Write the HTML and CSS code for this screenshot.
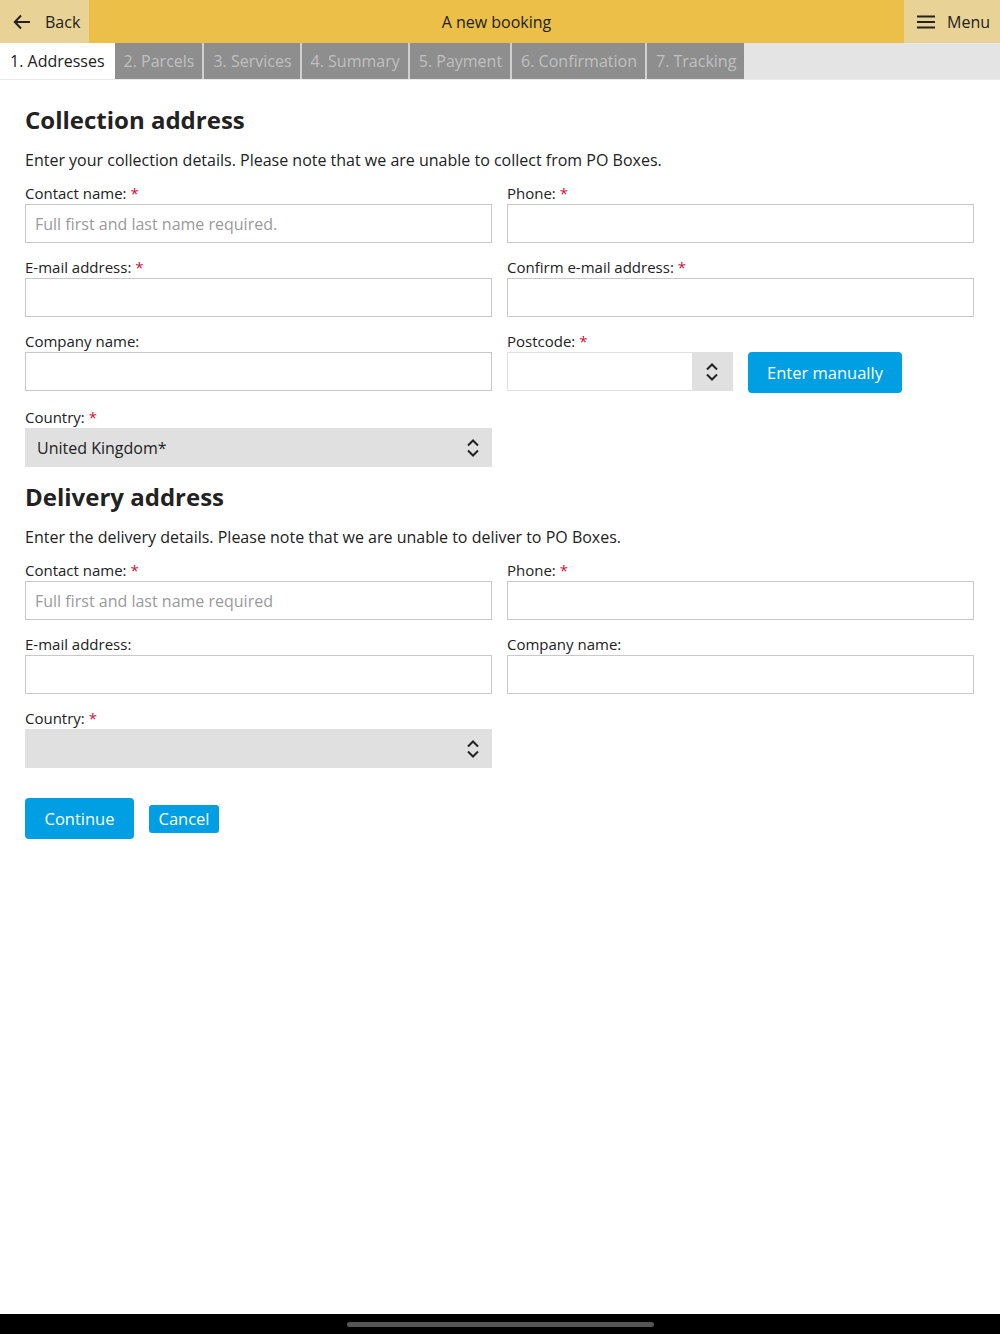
FILE: index.html
```html
<!DOCTYPE html>
<html lang="en">
<head>
<meta charset="utf-8">
<title>A new booking</title>
<link rel="stylesheet" href="styles.css">
</head>
<body>
<div class="app">
  <header class="topbar">
    <a class="nav-btn back">
      <svg width="18" height="16" viewBox="0 0 18 16"><path d="M8 1.5 1.8 8 8 14.5M2 8h15" fill="none" stroke="#222" stroke-width="2"/></svg>
      <span>Back</span>
    </a>
    <div class="title">A new booking</div>
    <a class="nav-btn menu">
      <svg width="18" height="14" viewBox="0 0 18 14"><path d="M0 1.5h18M0 7h18M0 12.5h18" stroke="#222" stroke-width="2"/></svg>
      <span>Menu</span>
    </a>
  </header>
  <nav class="tabs">
    <span class="tab active">1. Addresses</span>
    <span class="tab">2. Parcels</span>
    <span class="tab">3. Services</span>
    <span class="tab">4. Summary</span>
    <span class="tab">5. Payment</span>
    <span class="tab">6. Confirmation</span>
    <span class="tab">7. Tracking</span>
  </nav>

  <main class="content">
    <h2 class="section-title">Collection address</h2>
    <p class="intro">Enter your collection details. Please note that we are unable to collect from PO Boxes.</p>
    <div class="grid">
      <div class="field"><label>Contact name: <span class="req">*</span></label><div class="input placeholder">Full first and last name required.</div></div>
      <div class="field"><label>Phone: <span class="req">*</span></label><div class="input"></div></div>
      <div class="field"><label>E-mail address: <span class="req">*</span></label><div class="input"></div></div>
      <div class="field"><label>Confirm e-mail address: <span class="req">*</span></label><div class="input"></div></div>
      <div class="field"><label>Company name:</label><div class="input"></div></div>
      <div class="field"><label>Postcode: <span class="req">*</span></label>
        <div class="postcode-row">
          <div class="postcode">
            <div class="pc-input"></div>
            <div class="pc-spin"><svg width="14" height="20" viewBox="0 0 14 20"><path d="M2 7.5 7 2.5l5 5M2 12.5l5 5 5-5" fill="none" stroke="#222" stroke-width="2"/></svg></div>
          </div>
          <button class="btn btn-lg manual">Enter manually</button>
        </div>
      </div>
      <div class="field"><label>Country: <span class="req">*</span></label>
        <div class="select"><span>United Kingdom*</span><svg width="14" height="20" viewBox="0 0 14 20"><path d="M2 7.5 7 2.5l5 5M2 12.5l5 5 5-5" fill="none" stroke="#222" stroke-width="2"/></svg></div>
      </div>
    </div>

    <h2 class="section-title second">Delivery address</h2>
    <p class="intro">Enter the delivery details. Please note that we are unable to deliver to PO Boxes.</p>
    <div class="grid">
      <div class="field"><label>Contact name: <span class="req">*</span></label><div class="input placeholder">Full first and last name required</div></div>
      <div class="field"><label>Phone: <span class="req">*</span></label><div class="input"></div></div>
      <div class="field"><label>E-mail address:</label><div class="input"></div></div>
      <div class="field"><label>Company name:</label><div class="input"></div></div>
      <div class="field"><label>Country: <span class="req">*</span></label>
        <div class="select"><span></span><svg width="14" height="20" viewBox="0 0 14 20"><path d="M2 7.5 7 2.5l5 5M2 12.5l5 5 5-5" fill="none" stroke="#222" stroke-width="2"/></svg></div>
      </div>
    </div>

    <div class="actions">
      <button class="btn btn-lg continue">Continue</button>
      <button class="btn btn-sm">Cancel</button>
    </div>
  </main>

  <footer class="home-bar"><span class="pill"></span></footer>
</div>
</body>
</html>
```

FILE: styles.css
```css
* { box-sizing: border-box; }
html, body { margin: 0; padding: 0; }
body {
  font-family: "Open Sans", "Noto Sans", sans-serif;
  color: #222;
  background: #fff;
  width: 1000px;
  height: 1334px;
}
.app {
  display: flex;
  flex-direction: column;
  height: 1334px;
}
.topbar {
  display: flex;
  align-items: stretch;
  height: 43px;
  background: #ecbf48;
}
.nav-btn {
  display: flex;
  align-items: center;
  gap: 14px;
  background: #e8d295;
  font-size: 16px;
  color: #222;
}
.back { width: 89px; padding-left: 13px; }
.menu { width: 96px; padding-left: 13px; gap: 12px; }
.title {
  flex: 1;
  display: flex;
  align-items: center;
  justify-content: center;
  font-size: 16px;
}
.tabs {
  display: flex;
  height: 37px;
  background: #e4e4e4;
  border-bottom: 1px solid #eaeaea;
}
.tab {
  display: flex;
  align-items: center;
  padding: 0 8px 0 9px;
  font-size: 16px;
  color: #c0c0c0;
  background: #8e8e8e;
  border-left: 2px solid #d0d0d0;
}
.tab.active {
  background: #fff;
  color: #222;
  border-left: none;
  padding: 0 10px;
}
.tab.active + .tab { border-left: none; }
.content {
  flex: 1;
  padding: 0 26px 0 25px;
}
.section-title {
  margin: 24px 0 0;
  font-size: 24px;
  line-height: 32px;
  font-weight: 700;
}
.section-title.second { margin-top: 14px; }
.intro {
  margin: 14px 0 0;
  font-size: 16px;
  line-height: 20px;
}
.grid {
  display: grid;
  grid-template-columns: 467px 467px;
  column-gap: 15px;
  row-gap: 14px;
  margin-top: 13px;
}
.field label {
  display: block;
  font-size: 15px;
  line-height: 20px;
  height: 21px;
}
.req { color: #d0103a; }
.input {
  height: 39px;
  border: 1px solid #c8c8c8;
  background: #fff;
  display: flex;
  align-items: center;
  padding: 0 9px;
  font-size: 16px;
}
.input.placeholder { color: #9a9a9a; }
.postcode-row {
  display: flex;
  align-items: flex-start;
  gap: 15px;
}
.postcode {
  display: flex;
  width: 226px;
  height: 39px;
  border: 1px solid #e0e0e0;
}
.pc-input { flex: 1; background: #fff; }
.pc-spin {
  width: 40px;
  background: #e0e0e0;
  display: flex;
  align-items: center;
  justify-content: center;
}
.btn {
  font-family: inherit;
  background: #009fe3;
  color: #fff;
  border: none;
  border-radius: 4px;
  cursor: pointer;
}
.btn-lg {
  height: 41px;
  font-size: 16.5px;
  padding: 0;
}
.manual { width: 154px; }
.continue { width: 109px; }
.btn-sm {
  height: 28px;
  width: 70px;
  font-size: 16.5px;
  padding: 0;
  border-radius: 3px;
}
.select {
  height: 39px;
  background: #e0e0e0;
  display: flex;
  align-items: center;
  justify-content: space-between;
  padding: 0 12px;
  font-size: 16px;
}
.actions {
  display: flex;
  align-items: center;
  gap: 15px;
  margin-top: 30px;
}
.home-bar {
  height: 20px;
  background: #000;
  display: flex;
  justify-content: center;
  align-items: center;
}
.pill {
  width: 307px;
  height: 5px;
  border-radius: 3px;
  background: #555;
}
```
